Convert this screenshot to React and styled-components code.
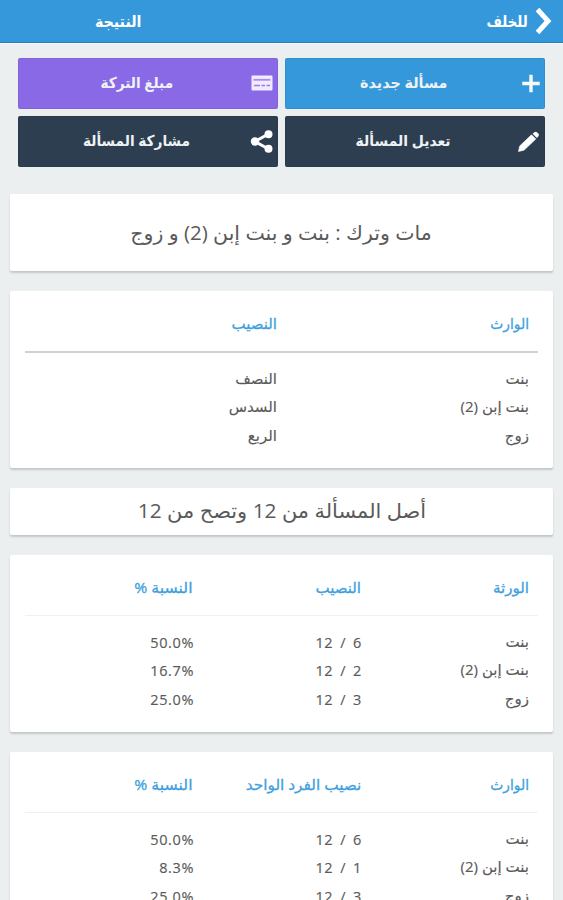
import React from 'react'
import styled, { createGlobalStyle } from 'styled-components'

const GlobalStyle = createGlobalStyle`
    * {
        box-sizing: border-box;
    }

    body {
        margin: 0;
        height: 900px;
        overflow: hidden;
        background-color: #ebeff0;
        color: #5a5a5a;
        font-family: "Open Sans", "DejaVu Sans", sans-serif;
    }
`;

const Screen = styled.div`
    direction: rtl;
    height: 900px;
    overflow: hidden;
`;

/* transform keeps the letters joined, letter-spacing would not */
const Label = styled.span`
    display: inline-block;
    white-space: nowrap;
    transform: scaleX(${({ $stretch }) => $stretch || 1});
    transform-origin: ${({ $origin }) => $origin || 'right'} center;
`;

const Header = styled.header`
    display: flex;
    align-items: center;
    height: 43px;
    padding-right: 11px;
    background-color: #3498db;
    border-bottom: 1px solid #1f82c5;
    box-shadow: 0 1px 0 #fafcfd;
    color: #fff;
    font-size: 16px;
    font-weight: bold;
`;

const Back = styled.div`
    display: flex;
    align-items: center;
    gap: 7px;
    flex: 1;
    line-height: 38px;
`;

const Title = styled.h1`
    width: 236px;
    margin: 0;
    font-size: 16px;
    line-height: 38px;
    text-align: center;
`;

const Actions = styled.nav`
    display: grid;
    grid-template-columns: 260px 260px;
    grid-auto-rows: 51px;
    gap: 7px;
    padding: 15px 18px 0;
`;

const ActionButton = styled.button`
    display: flex;
    align-items: center;
    padding: 0 4px 0 0;
    border: 0;
    border-radius: 2px;
    background-color: ${({ $color }) => $color};
    box-shadow: inset 0 0 0 1px rgba(0, 0, 0, 0.06);
    color: #eef2f5;
    font: bold 15px "Open Sans", "DejaVu Sans", sans-serif;
`;

const ActionText = styled.span`
    flex: 1;
    text-align: center;
    padding: 0 0 3px 5px;
`;

const Cards = styled.main`
    display: flex;
    flex-direction: column;
    gap: 20px;
    padding: 27px 10px 0;
`;

const Card = styled.section`
    height: ${({ $height }) => $height}px;
    flex-shrink: 0;
    padding: ${({ $top }) => $top || 0}px 15px 0;
    background-color: #fff;
    border-radius: 2px;
    box-shadow: 0 2px 2px rgba(0, 0, 0, 0.17);
`;

const Statement = styled.p`
    margin: 0;
    font-size: 20px;
    line-height: ${({ $line }) => $line}px;
    text-align: center;
`;

const Row = styled.div`
    display: grid;
    grid-template-columns: repeat(${({ $columns }) => $columns}, 1fr);
    height: 28.3px;
    line-height: 28px;
    padding-right: 9px;
    font-size: 15px;
    -webkit-text-stroke: 0.15px currentColor;
`;

const HeadRow = styled(Row)`
    height: ${({ $strong }) => $strong ? 44 : 43}px;
    color: #3f9fdd;
    -webkit-text-stroke: 0.3px currentColor;
    border-bottom: ${({ $strong }) => $strong ? '2px solid #cfd1d2' : '1px solid #eff1f3'};
    margin-bottom: 11px;
`;

const Numeric = styled.span`
    direction: ltr;
    text-align: right;
    font-size: 14.5px;
    line-height: 31px;
    letter-spacing: 0.6px;
    word-spacing: 2.6px;
    margin-right: -1px;
`;

const heirs = ['بنت', 'بنت إبن (2)', 'زوج']

const ChevronIcon = () => (
    <svg width="17" height="28" viewBox="0 0 17 28" fill="none" stroke="#fff" strokeWidth="5">
        <path d="M2.500 2.500L13 14L2.500 25.500" />
    </svg>
)

const PlusIcon = () => (
    <svg width="24" height="24" viewBox="0 0 24 24" stroke="#f5fafd" strokeWidth="3.4">
        <path d="M14 2.800v17.400M5.300 11.500h17.400" />
    </svg>
)

const CardIcon = () => (
    <svg width="24" height="24" viewBox="0 0 24 24">
        <rect x="1.5" y="3.500" width="21" height="15" rx="1" fill="#f1ebfd" />
        <path d="M3.5 7.800h17" stroke="#a68cf0" strokeWidth="1.8" />
        <path d="M4 13.500h6M11.500 13.500h3.500M16.5 13.500h3.500" stroke="#9a7aec" strokeWidth="1.600" />
    </svg>
)

const PencilIcon = () => (
    <svg width="24" height="24" viewBox="0 0 24 24" fill="#fff">
        <path d="M1.500 21.500l1.200-5.500L14.500 4.800l4.300 4.300L7 20.200z" strokeLinejoin="round" stroke="#fff" strokeWidth=".6" />
        <path d="M15.600 3.800l1.700-1.500c1-.9 2-.8 2.900.1l1.100 1.200c.9.9.8 1.900 0 2.800L19.800 8z" />
    </svg>
)

const ShareIcon = () => (
    <svg width="24" height="24" viewBox="0 0 24 24" fill="#fff">
        <path d="M18.500 4L5 11.500l13.500 7.500" fill="none" stroke="#fff" strokeWidth="3" />
        <circle cx="18.500" cy="4.300" r="4" />
        <circle cx="5" cy="11.500" r="4.200" />
        <circle cx="18.500" cy="18.800" r="4" />
    </svg>
)

const actions = [
    { text: 'مسألة جديدة', color: '#3498db', Icon: PlusIcon, stretch: 0.955 },
    { text: 'مبلغ التركة', color: '#8a69e6', Icon: CardIcon, stretch: 0.91 },
    { text: 'تعديل المسألة', color: '#2c3e50', Icon: PencilIcon, stretch: 0.93 },
    { text: 'مشاركة المسألة', color: '#2c3e50', Icon: ShareIcon, stretch: 0.915 },
]

const SharesTable = ({ head, rows }) => (
    <Card $height={177} $top={18}>
        <HeadRow $columns={3}>
            {
                head.map(({ text, stretch }) => (
                    <span key={text}><Label $stretch={stretch}>{text}</Label></span>
                ))
            }
        </HeadRow>
        {
            rows.map(([share, percent], idx) => (
                <Row $columns={3} key={idx}>
                    <span><Label>{heirs[idx]}</Label></span>
                    <Numeric>12 / {share}</Numeric>
                    <Numeric>{percent}</Numeric>
                </Row>
            ))
        }
    </Card>
)

const percentHead = { text: 'النسبة %', stretch: 1.05 }

export default function App() {
    return (
        <Screen>
            <GlobalStyle />
            <Header>
                <Back>
                    <ChevronIcon />
                    <Label $stretch={0.83}>للخلف</Label>
                </Back>
                <Title><Label $origin="center" $stretch={0.89}>النتيجة</Label></Title>
            </Header>
            <Actions>
                {
                    actions.map(({ text, color, Icon, stretch }) => (
                        <ActionButton $color={color} key={text}>
                            <Icon />
                            <ActionText><Label $origin="center" $stretch={stretch}>{text}</Label></ActionText>
                        </ActionButton>
                    ))
                }
            </Actions>
            <Cards>
                <Card $height={77}>
                    <Statement $line={78}>
                        <Label $origin="center" $stretch={1.025}>مات وترك : بنت و بنت إبن (2) و زوج</Label>
                    </Statement>
                </Card>
                <Card $height={177} $top={18}>
                    <HeadRow $columns={2} $strong>
                        <span><Label $stretch={0.92}>الوارث</Label></span>
                        <span><Label>النصيب</Label></span>
                    </HeadRow>
                    {
                        ['النصف', 'السدس', 'الربع'].map((share, idx) => (
                            <Row $columns={2} key={share}>
                                <span><Label>{heirs[idx]}</Label></span>
                                <span><Label>{share}</Label></span>
                            </Row>
                        ))
                    }
                </Card>
                <Card $height={47}>
                    <Statement $line={45}>
                        <Label $origin="center" $stretch={1.045}>أصل المسألة من 12 وتصح من 12</Label>
                    </Statement>
                </Card>
                <SharesTable
                    head={[{ text: 'الورثة' }, { text: 'النصيب' }, percentHead]}
                    rows={[[6, '50.0%'], [2, '16.7%'], [3, '25.0%']]}
                />
                <SharesTable
                    head={[{ text: 'الوارث', stretch: 0.92 }, { text: 'نصيب الفرد الواحد', stretch: 1.02 }, percentHead]}
                    rows={[[6, '50.0%'], [1, '8.3%'], [3, '25.0%']]}
                />
            </Cards>
        </Screen>
    )
}
